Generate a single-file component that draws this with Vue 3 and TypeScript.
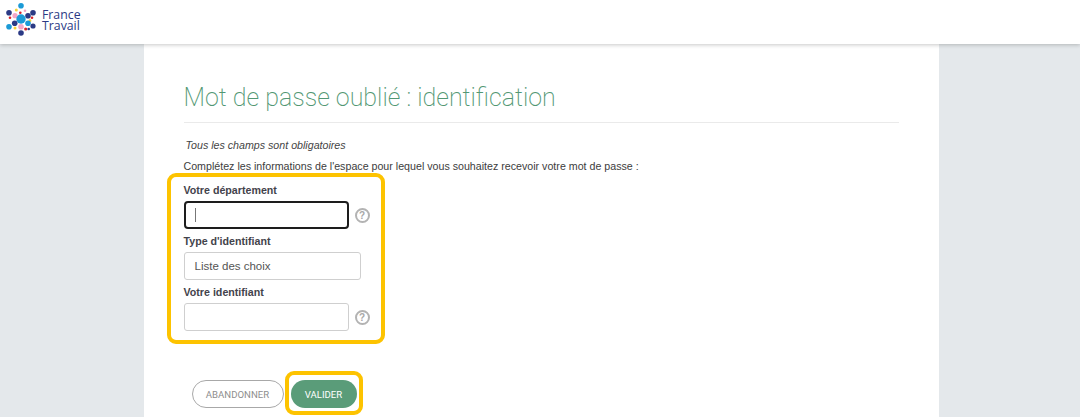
<script setup lang="ts">
const dots: [number, number, number, string][] = [
  [21, 5.7, 2.8, '#1b9ad6'],
  [16.3, 10, 1.5, '#f6d33c'],
  [25, 10.7, 1.3, '#f4a6c6'],
  [20.3, 12.7, 1.3, '#d8232a'],
  [9, 12.7, 2.8, '#2b3a85'],
  [15, 15.7, 2.6, '#f4a6c6'],
  [10, 17.7, 1.3, '#d8232a'],
  [28, 15.7, 2.8, '#2b3a85'],
  [33, 12.7, 2.8, '#2b3a85'],
  [32, 17.7, 1.3, '#d8232a'],
  [30, 20.7, 1.4, '#f6d33c'],
  [21, 19, 4.7, '#1b9ad6'],
  [14.7, 23.3, 2.8, '#2b3a85'],
  [9, 26.7, 2.8, '#1b9ad6'],
  [15, 28, 1.5, '#f6d33c'],
  [21, 26.7, 2.8, '#f4a6c6'],
  [28, 23.3, 2.8, '#1b9ad6'],
  [33, 26, 2.6, '#2b3a85'],
  [25.7, 29, 1.6, '#d8232a'],
  [28.7, 29, 1.3, '#2b3a85'],
  [21, 33, 2.8, '#2b3a85'],
]
</script>

<template>
  <div class="page">
    <header class="topbar">
      <div class="logo">
        <svg class="logo-mark" width="36" height="37" viewBox="3 0 36 37" aria-hidden="true">
          <circle v-for="(d, i) in dots" :key="i" :cx="d[0]" :cy="d[1]" :r="d[2]" :fill="d[3]" />
        </svg>
        <div class="logo-text">France<br />Travail</div>
      </div>
    </header>
    <div class="backdrop">
      <main class="card">
        <h1 class="title">Mot de passe oublié : identification</h1>
        <p class="required">Tous les champs sont obligatoires</p>
        <p class="intro">Complétez les informations de l'espace pour lequel vous souhaitez recevoir votre mot de passe :</p>

        <div class="highlight fields">
          <label class="label">Votre département</label>
          <div class="row">
            <div class="input focused"><span class="caret"></span></div>
            <span class="help">?</span>
          </div>
          <label class="label">Type d'identifiant</label>
          <div class="row">
            <div class="input select">Liste des choix</div>
          </div>
          <label class="label">Votre identifiant</label>
          <div class="row">
            <div class="input"></div>
            <span class="help">?</span>
          </div>
        </div>

        <div class="actions">
          <button class="btn ghost" type="button">ABANDONNER</button>
          <div class="highlight btn-wrap">
            <button class="btn primary" type="button">VALIDER</button>
          </div>
        </div>
      </main>
    </div>
  </div>
</template>

<style>
html, body { margin: 0; padding: 0; background: #e4e8eb; overflow: hidden; }
</style>

<style scoped>
.page {
  width: 1080px;
  height: 417px;
  overflow: hidden;
  font-family: "Liberation Sans", Arial, sans-serif;
  color: #3d3d3d;
  display: flex;
  flex-direction: column;
  background: #e4e8eb;
}
.topbar {
  position: relative;
  z-index: 2;
  flex: 0 0 44px;
  height: 44px;
  background: #fff;
  box-shadow: 0 1px 4px rgba(0, 0, 0, 0.22);
  padding-left: 3px;
  box-sizing: border-box;
}
.logo { display: flex; align-items: flex-start; }
.logo-mark { display: block; }
.logo-text {
  margin: 9px 0 0 3px;
  font-family: "Open Sans", sans-serif;
  font-size: 12.3px;
  font-weight: 500;
  line-height: 11px;
  color: #2b3a85;
}
.backdrop { flex: 1; display: flex; justify-content: center; min-height: 0; padding-left: 2px; }
.card {
  width: 795px;
  background: #fff;
  box-sizing: border-box;
  padding: 35px 40px 0 40px;
}
.title {
  margin: 0;
  font-family: Roboto, sans-serif;
  font-weight: 200;
  font-size: 24.95px;
  line-height: 38px;
  color: #529773;
  padding-bottom: 5px;
  border-bottom: 1px solid #eaeaea;
}
.required {
  margin: 15px 0 0 2px;
  font-size: 10.67px;
  line-height: 14px;
  font-style: italic;
  color: #444;
}
.intro {
  margin: 7px 0 0;
  font-size: 10.67px;
  line-height: 14px;
  color: #3d3d3d;
}
.highlight {
  border: 4px solid #fdc300;
  border-radius: 9px;
  box-sizing: border-box;
}
.fields {
  width: 218px;
  height: 171px;
  margin: 0 0 0 -17px;
  padding: 7px 0 0 13px;
}
.label {
  display: block;
  font-size: 10.67px;
  font-weight: 700;
  line-height: 13px;
  color: #43434b;
}
.row { display: flex; align-items: center; margin: 4px 0 6px; }
.input {
  width: 165px;
  height: 28px;
  box-sizing: border-box;
  border: 1px solid #cfcfcf;
  border-radius: 3px;
  background: #fff;
  display: flex;
  align-items: center;
  padding-left: 10px;
}
.input.focused {
  border: 2px solid #1d1d1d;
  border-radius: 4px;
  padding-left: 9px;
}
.input.select {
  width: 177px;
  font-size: 11.5px;
  color: #555;
}
.caret { width: 1px; height: 14px; background: #777; }
.help {
  width: 15px;
  height: 15px;
  margin-left: 6px;
  border: 2px solid #b3b3b3;
  border-radius: 50%;
  box-sizing: border-box;
  display: flex;
  align-items: center;
  justify-content: center;
  font-size: 10px;
  font-weight: 700;
  color: #a8a8a8;
}
.actions {
  display: flex;
  align-items: center;
  margin: 27px 0 0 8px;
}
.btn-wrap {
  width: 78px;
  height: 44px;
  margin-left: 1px;
  padding-top: 2px;
  display: flex;
  align-items: center;
  justify-content: center;
}
.btn {
  height: 28px;
  border-radius: 14px;
  font-family: Roboto, sans-serif;
  font-size: 9.6px;
  padding: 0;
  box-sizing: border-box;
}
.ghost {
  width: 92px;
  margin-top: 2px;
  background: #fff;
  border: 1px solid #a8a8a8;
  color: #8e8e8e;
}
.primary {
  width: 66px;
  background: #5a9c79;
  border: 0;
  color: #fff;
}
</style>
